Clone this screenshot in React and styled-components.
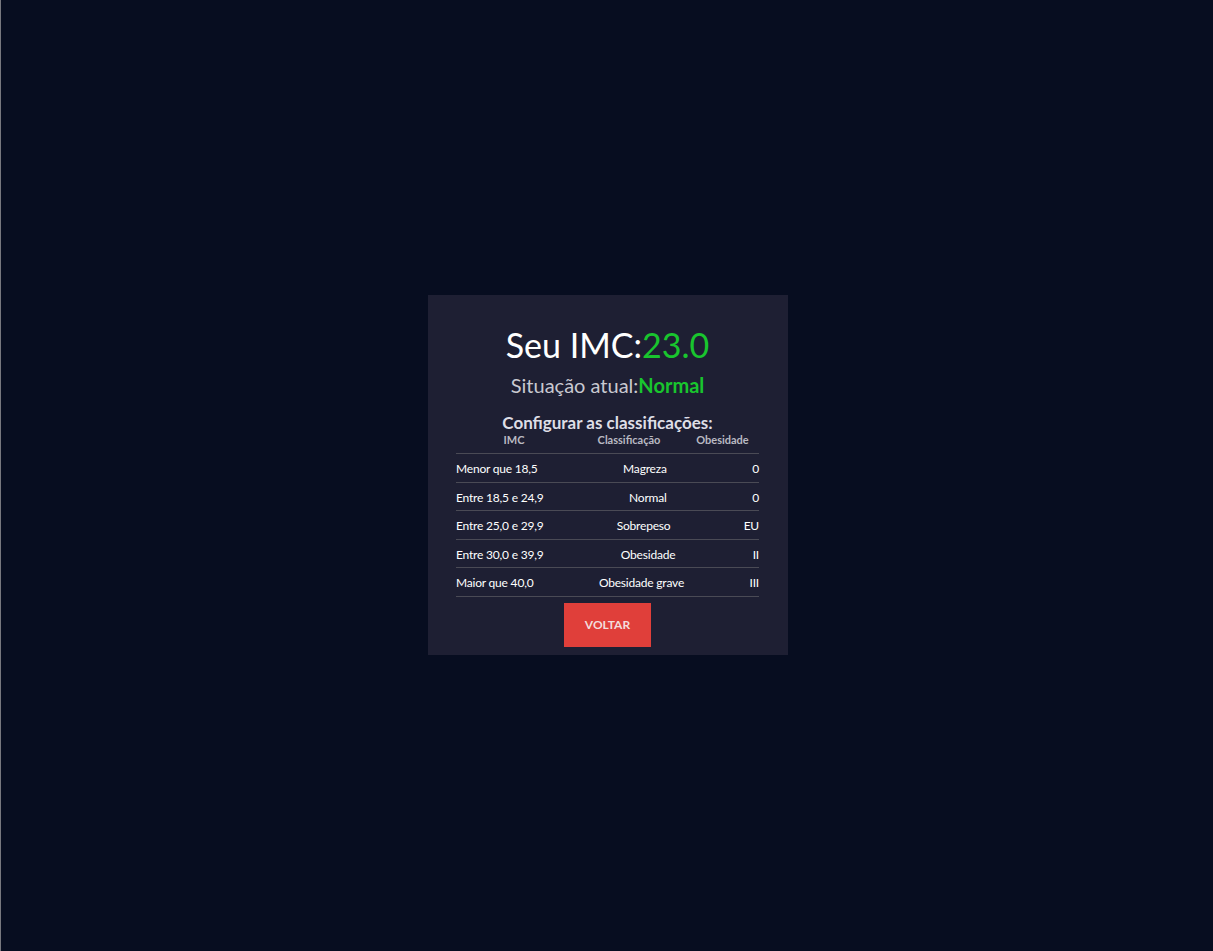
import React from "react";
import styled, { createGlobalStyle } from "styled-components";

const GlobalStyle = createGlobalStyle`
  html, body {
    margin: 0;
    padding: 0;
    background: #070d20;
  }
  body {
    font-family: Lato, "Noto Sans", sans-serif;
  }
`;

const Page = styled.div`
  min-height: 100vh;
  box-sizing: border-box;
  border-left: 1px solid #77787e;
  padding: 0 0 1px 2px;
  display: flex;
  align-items: center;
  justify-content: center;
`;

const Card = styled.div`
  width: 360px;
  height: 360px;
  box-sizing: border-box;
  background: #1e1f33;
  padding: 30px 29px 8px 28px;
  display: flex;
  flex-direction: column;
  align-items: center;
`;

const Title = styled.h1`
  margin: 0;
  font-size: 34px;
  font-weight: 400;
  line-height: 1.2;
  color: #ffffff;
`;

const Status = styled.h2`
  margin: 7px 0 0;
  font-size: 20px;
  font-weight: 400;
  line-height: 1.2;
  color: #c9c9d1;
`;

const Green = styled.span`
  color: #19c52e;
  font-weight: ${(p) => (p.$bold ? 700 : 400)};
`;

const Subtitle = styled.h3`
  margin: 17px 0 0;
  font-size: 17px;
  font-weight: 700;
  line-height: 1.1;
  color: #dedee6;
`;

const Table = styled.div`
  width: 303px;
  display: flex;
  flex-direction: column;
`;

const HeadRow = styled.div`
  display: grid;
  grid-template-columns: 116px 114px 73px;
  font-size: 11px;
  font-weight: 700;
  line-height: 13px;
  color: #b9b9c2;
  padding-top: 1px;
  padding-bottom: 7px;
  border-bottom: 1px solid #4a4a55;
`;

const HeadCell = styled.span`
  text-align: center;
`;

const Row = styled.div`
  display: flex;
  justify-content: space-between;
  align-items: center;
  height: 28.5px;
  box-sizing: border-box;
  border-bottom: 1px solid #4a4a55;
  font-size: 12px;
  letter-spacing: -0.2px;
  color: #ffffff;
  padding-top: 1px;
`;

const Button = styled.button`
  margin-top: 6px;
  flex-shrink: 0;
  width: 87px;
  height: 44px;
  border: none;
  background: #e03f3a;
  color: #f3dcdc;
  font-family: Lato, "Noto Sans", sans-serif;
  font-size: 12px;
  font-weight: 700;
  cursor: pointer;
`;

const rows = [
  ["Menor que 18,5", "Magreza", "0"],
  ["Entre 18,5 e 24,9", "Normal", "0"],
  ["Entre 25,0 e 29,9", "Sobrepeso", "EU"],
  ["Entre 30,0 e 39,9", "Obesidade", "II"],
  ["Maior que 40,0", "Obesidade grave", "III"],
];

export default function App() {
  return (
    <>
      <GlobalStyle />
      <Page>
        <Card>
          <Title>
            Seu IMC:<Green>23.0</Green>
          </Title>
          <Status>
            Situação atual:<Green $bold>Normal</Green>
          </Status>
          <Subtitle>Configurar as classificações:</Subtitle>
          <Table>
            <HeadRow>
              <HeadCell>IMC</HeadCell>
              <HeadCell>Classificação</HeadCell>
              <HeadCell>Obesidade</HeadCell>
            </HeadRow>
            {rows.map((r) => (
              <Row key={r[0]}>
                <span>{r[0]}</span>
                <span>{r[1]}</span>
                <span>{r[2]}</span>
              </Row>
            ))}
          </Table>
          <Button>VOLTAR</Button>
        </Card>
      </Page>
    </>
  );
}
